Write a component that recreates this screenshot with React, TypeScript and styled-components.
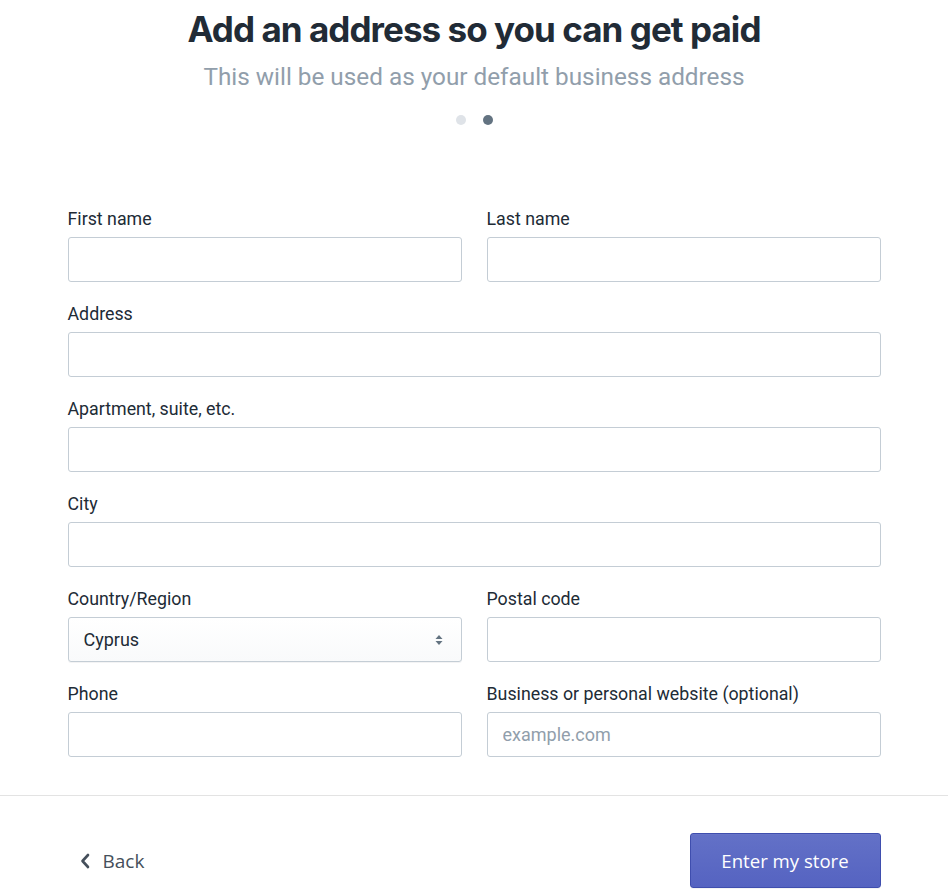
import React from "react";
import styled, { createGlobalStyle } from "styled-components";

const Global = createGlobalStyle`
  html, body { margin: 0; padding: 0; background: #ffffff; }
  body { font-family: Roboto, "Liberation Sans", Arial, sans-serif; color: #212b36; }
  * { box-sizing: border-box; }
`;

const Page = styled.div`
  width: 948px;
  min-height: 893px;
  display: flex;
  flex-direction: column;
`;

const Header = styled.header`
  display: flex;
  flex-direction: column;
  align-items: center;
  padding-top: 5px;
`;

const Title = styled.h1`
  margin: 0;
  font-family: Inter, "Liberation Sans", Arial, sans-serif;
  font-weight: 700;
  font-size: 35px;
  line-height: 48px;
  letter-spacing: -0.95px;
  color: #212b36;
`;

const Subtitle = styled.p`
  margin: 9px 0 0;
  font-family: Roboto, "Liberation Sans", Arial, sans-serif;
  font-size: 24.3px;
  line-height: 30px;
  color: #919eab;
`;

const Dots = styled.div`
  display: flex;
  gap: 17px;
  margin-top: 23px;
`;

const Dot = styled.span<{ $active?: boolean }>`
  width: 10px;
  height: 10px;
  border-radius: 50%;
  background: ${(p) => (p.$active ? "#637381" : "#dfe3e8")};
`;

const Form = styled.form`
  width: 813px;
  margin: 82px auto 0;
  display: grid;
  grid-template-columns: 1fr 1fr;
  column-gap: 25px;
  row-gap: 20px;
`;

const Field = styled.label<{ $wide?: boolean }>`
  display: flex;
  flex-direction: column;
  gap: 6px;
  grid-column: ${(p) => (p.$wide ? "1 / -1" : "auto")};
`;

const LabelText = styled.span`
  font-size: 17.8px;
  line-height: 24px;
  color: #212b36;
`;

const Input = styled.input`
  height: 45px;
  width: 100%;
  border: 1px solid #c4cdd5;
  border-radius: 3px;
  padding: 0 15px;
  font-family: Roboto, "Liberation Sans", Arial, sans-serif;
  font-size: 18px;
  color: #212b36;
  background: #fff;
  outline: none;
  &::placeholder { color: #919eab; }
`;

const SelectBox = styled.div`
  position: relative;
  height: 45px;
  border: 1px solid #c4cdd5;
  border-radius: 3px;
  background: linear-gradient(180deg, #ffffff, #f9fafb);
  box-shadow: 0 1px 0 rgba(22, 29, 37, 0.05);
  display: flex;
  align-items: center;
  padding: 0 15px;
  font-size: 18px;
  color: #212b36;
`;

const Arrows = styled.svg`
  position: absolute;
  right: 17px;
  top: 50%;
  transform: translateY(-50%);
`;

const Divider = styled.hr`
  margin: 38px 0 0;
  border: 0;
  border-top: 1px solid #e3e3e3;
  width: 100%;
`;

const Footer = styled.footer`
  width: 813px;
  margin: 37px auto 0;
  display: flex;
  align-items: center;
  justify-content: space-between;
`;

const BackLink = styled.a`
  display: flex;
  align-items: center;
  gap: 13px;
  margin-left: 12px;
  font-family: "Open Sans", "Liberation Sans", Arial, sans-serif;
  font-size: 19px;
  color: #454f5b;
  text-decoration: none;
`;

const PrimaryButton = styled.button`
  width: 191px;
  height: 55px;
  border: 1px solid #3f4eae;
  border-radius: 3px;
  background: linear-gradient(180deg, #6371c7, #5563c1);
  box-shadow: inset 0 1px 0 0 #6774c8, 0 1px 0 0 rgba(22, 29, 37, 0.05);
  color: #ffffff;
  font-family: "Open Sans", "Liberation Sans", Arial, sans-serif;
  font-size: 18.6px;
  cursor: pointer;
`;

export default function App() {
  return (
    <Page>
      <Global />
      <Header>
        <Title>Add an address so you can get paid</Title>
        <Subtitle>This will be used as your default business address</Subtitle>
        <Dots>
          <Dot />
          <Dot $active />
        </Dots>
      </Header>
      <Form onSubmit={(e) => e.preventDefault()}>
        <Field>
          <LabelText>First name</LabelText>
          <Input />
        </Field>
        <Field>
          <LabelText>Last name</LabelText>
          <Input />
        </Field>
        <Field $wide>
          <LabelText>Address</LabelText>
          <Input />
        </Field>
        <Field $wide>
          <LabelText>Apartment, suite, etc.</LabelText>
          <Input />
        </Field>
        <Field $wide>
          <LabelText>City</LabelText>
          <Input />
        </Field>
        <Field>
          <LabelText>Country/Region</LabelText>
          <SelectBox>
            Cyprus
            <Arrows width="10" height="14" viewBox="0 0 10 14">
              <path d="M5 2 L8.5 6 H1.5 Z" fill="#637381" />
              <path d="M5 12 L8.5 8 H1.5 Z" fill="#637381" />
            </Arrows>
          </SelectBox>
        </Field>
        <Field>
          <LabelText>Postal code</LabelText>
          <Input />
        </Field>
        <Field>
          <LabelText>Phone</LabelText>
          <Input />
        </Field>
        <Field>
          <LabelText>Business or personal website (optional)</LabelText>
          <Input placeholder="example.com" />
        </Field>
      </Form>
      <Divider />
      <Footer>
        <BackLink href="#">
          <svg width="10" height="16" viewBox="0 0 10 16">
            <path d="M8 2 L2.5 8 L8 14" fill="none" stroke="#454f5b" strokeWidth="2.6" strokeLinecap="round" strokeLinejoin="round" />
          </svg>
          Back
        </BackLink>
        <PrimaryButton type="button">Enter my store</PrimaryButton>
      </Footer>
    </Page>
  );
}
